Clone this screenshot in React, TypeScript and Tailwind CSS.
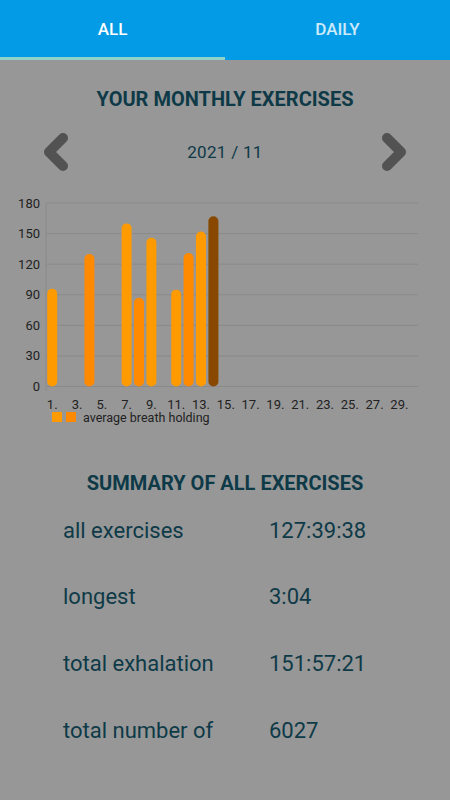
import { useState } from "react";

const BARS = [
  { day: 1, value: 96, color: "#ff9a00" },
  { day: 4, value: 130, color: "#ff8a00" },
  { day: 7, value: 160, color: "#ff9a00" },
  { day: 8, value: 87, color: "#ff8a00" },
  { day: 9, value: 146, color: "#ff9a00" },
  { day: 11, value: 95, color: "#ff9a00" },
  { day: 12, value: 131, color: "#ff8a00" },
  { day: 13, value: 152, color: "#ff9a00" },
  { day: 14, value: 167, color: "#884800" },
];

const SUMMARY = [
  { label: "all exercises", value: "127:39:38" },
  { label: "longest", value: "3:04" },
  { label: "total exhalation", value: "151:57:21" },
  { label: "total number of", value: "6027" },
];

const TOP = 8;
const ZERO = 191.5;
const LEFT = 46;
const RIGHT = 418;
const SLOT = 12.4;

const yOf = (v: number) => ZERO - (v / 180) * (ZERO - TOP);
const xOf = (day: number) => LEFT + (day - 0.5) * SLOT;

const Chart = () => {
  const ticks = [0, 30, 60, 90, 120, 150, 180];
  const days = Array.from({ length: 15 }, (_, i) => i * 2 + 1);

  return (
    <svg width="450" height="216" viewBox="0 0 450 216" className="block">
      {ticks.map((t) => (
        <g key={t}>
          <line x1={LEFT} x2={RIGHT} y1={yOf(t)} y2={yOf(t)} stroke="#8a8a8a" strokeWidth="1" />
          <text
            x="40"
            y={yOf(t) + 4.5}
            textAnchor="end"
            fontSize="13"
            fill="#222"
            fontFamily="Roboto, sans-serif"
          >
            {t}
          </text>
        </g>
      ))}
      <line x1={LEFT} x2={LEFT} y1={TOP} y2={ZERO + 4} stroke="#8a8a8a" strokeWidth="1" />

      {BARS.map((b) => (
        <rect
          key={b.day}
          x={xOf(b.day) - 5}
          y={yOf(b.value)}
          width="10"
          height={ZERO - yOf(b.value)}
          rx="5"
          fill={b.color}
        />
      ))}

      {days.map((d) => (
        <text
          key={d}
          x={xOf(d)}
          y="213.5"
          textAnchor="middle"
          fontSize="13"
          fill="#222"
          fontFamily="Roboto, sans-serif"
        >
          {d}.
        </text>
      ))}
    </svg>
  );
};

export default function App() {
  const [tab, setTab] = useState(0);

  return (
    <div className="min-h-[800px] w-[450px] bg-[#979797] font-['Roboto',sans-serif] text-[#0e3a48]">
      {/* tabs */}
      <div className="flex h-[60px] bg-[#039be5]">
        {["ALL", "DAILY"].map((t, i) => (
          <button key={t} onClick={() => setTab(i)} className="flex flex-1 flex-col">
            <span
              className={
                "flex flex-1 items-center justify-center pt-[2px] text-[17px] font-medium " +
                (tab === i ? "text-white" : "text-white/80")
              }
            >
              {t}
            </span>
            <span className={"h-[3px] w-full " + (tab === i ? "bg-[#8fd3cb]" : "bg-transparent")} />
          </button>
        ))}
      </div>

      <h1 className="mt-[27px] text-center text-[20px] font-bold leading-[24px]">YOUR MONTHLY EXERCISES</h1>

      <div className="mt-[21px] flex h-[40px] items-center justify-between px-[40px]">
        <svg width="30" height="40" viewBox="0 0 30 40">
          <path d="M23 6 L9 20 L23 34" fill="none" stroke="#525252" strokeWidth="10" strokeLinecap="round" strokeLinejoin="round" />
        </svg>
        <span className="pt-[2px] text-[17px] tracking-[0.3px]">2021 / 11</span>
        <svg width="30" height="40" viewBox="0 0 30 40">
          <path d="M7 6 L21 20 L7 34" fill="none" stroke="#525252" strokeWidth="10" strokeLinecap="round" strokeLinejoin="round" />
        </svg>
      </div>

      <div className="mt-[23px]">
        <Chart />
      </div>

      <div className="mt-[1px] flex h-[10px] items-center pl-[52px]">
        <span className="h-[10px] w-[10px] bg-[#ff9a00]" />
        <span className="ml-[4px] h-[10px] w-[10px] bg-[#ff8a00]" />
        <span className="ml-[7px] mt-[2px] text-[12.5px] leading-none text-[#222]">average breath holding</span>
      </div>

      <h2 className="mt-[49px] text-center text-[20px] font-bold leading-[24px]">SUMMARY OF ALL EXERCISES</h2>

      <div className="mt-[2px] flex flex-col">
        {SUMMARY.map((row) => (
          <div key={row.label} className="flex h-[66.67px] items-center pl-[63px] text-[22px]">
            <span className="w-[206px]">{row.label}</span>
            <span>{row.value}</span>
          </div>
        ))}
      </div>
    </div>
  );
}
